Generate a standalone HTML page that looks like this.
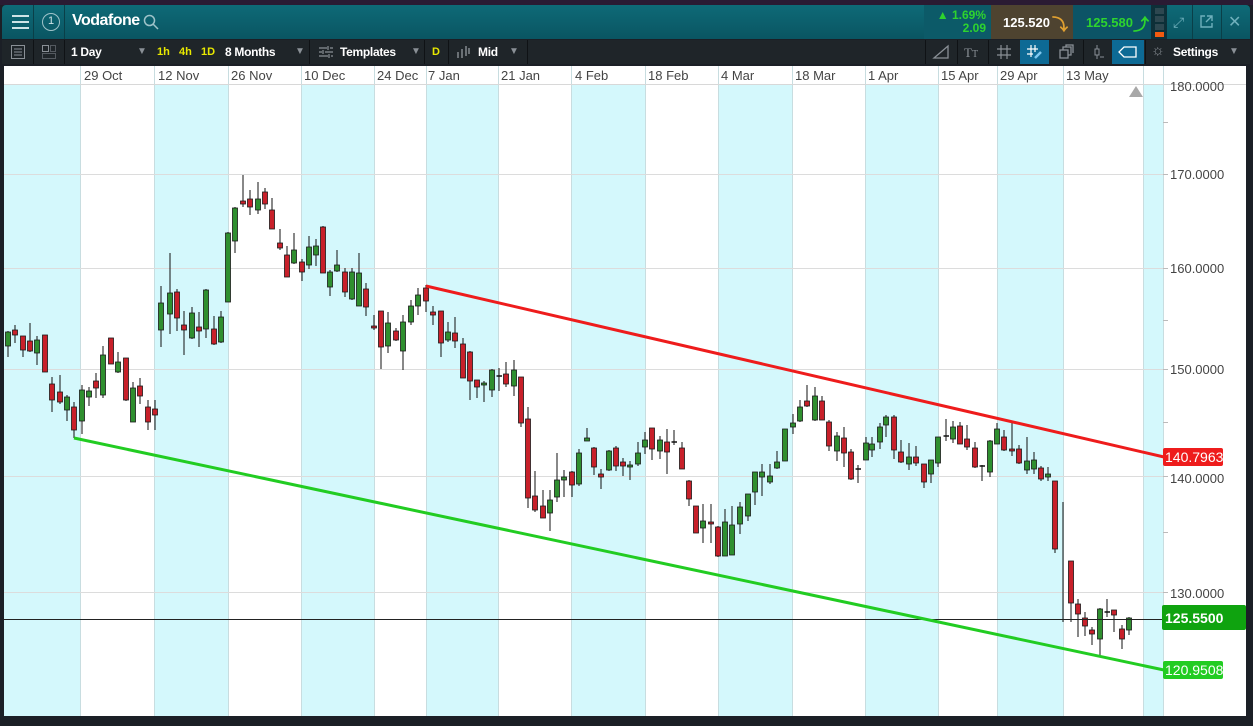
<!DOCTYPE html>
<html><head><meta charset="utf-8"><style>
*{margin:0;padding:0;box-sizing:border-box}
body{width:1253px;height:726px;overflow:hidden;background:#1b1f26;font-family:"Liberation Sans",sans-serif;position:relative}
.abs{position:absolute}
.tb{color:#fff;font-size:12px;font-weight:bold;letter-spacing:-0.3px}
.sep{position:absolute;top:40px;width:1px;height:24px;background:#0f1215}
.y{color:#e8e800;font-size:11px;font-weight:bold}
.dd{color:#8a9096;font-size:10px}
</style></head><body>
<div class="abs" style="left:0;top:0;width:1253px;height:5px;background:#2a1b33"></div>
<div class="abs" style="left:2px;top:5px;width:1248px;height:34px;background:linear-gradient(#0e6a77,#0a5562);border-radius:4px 4px 0 0"></div>
<!-- hamburger -->
<div class="abs" style="left:12px;top:15px;width:17px;height:2px;background:#cfe3e6;box-shadow:0 6px 0 #cfe3e6,0 12px 0 #cfe3e6"></div>
<div class="abs" style="left:33px;top:5px;width:1px;height:34px;background:#0a3f48"></div>
<div class="abs" style="left:42px;top:13px;width:18px;height:18px;border:1.5px solid #9fc3c9;border-radius:50%;color:#cfe3e6;font-size:11px;text-align:center;line-height:15px">1</div>
<div class="abs" style="left:64px;top:5px;width:1px;height:34px;background:#0a3f48"></div>
<div class="abs" style="left:72px;top:12px;color:#fff;font-size:16px;font-weight:bold;letter-spacing:-0.5px">Vodafone</div>
<svg class="abs" style="left:143px;top:14px" width="16" height="16"><circle cx="6.5" cy="6.5" r="5" fill="none" stroke="#9fc3c9" stroke-width="1.5"/><line x1="10" y1="10" x2="15" y2="15" stroke="#9fc3c9" stroke-width="1.5"/></svg>
<!-- price boxes -->
<div class="abs" style="left:924px;top:5px;width:67px;height:34px;background:#0c5a68"></div>
<div class="abs" style="left:936px;top:9px;color:#2ed42e;font-size:12px;font-weight:bold;text-align:right;width:50px;line-height:13px">▲ 1.69%<br>2.09</div>
<div class="abs" style="left:991px;top:5px;width:82px;height:34px;background:#4e4330"></div>
<div class="abs" style="left:1003px;top:15px;color:#fff;font-size:13px;font-weight:bold">125.520</div>
<div class="abs" style="left:1052px;top:11px;color:#e0a030;font-size:16px;font-weight:bold">⤵</div>
<div class="abs" style="left:1073px;top:5px;width:78px;height:34px;background:#0c5466"></div>
<div class="abs" style="left:1086px;top:15px;color:#2ed42e;font-size:13px;font-weight:bold">125.580</div>
<div class="abs" style="left:1133px;top:11px;color:#2ed42e;font-size:16px;font-weight:bold">⤴</div>
<div class="abs" style="left:1151px;top:5px;width:16px;height:34px;background:#0d2f38"></div>
<div class="abs" style="left:1155px;top:8px;width:9px;height:6px;background:#2d4750;box-shadow:0 8px 0 #2d4750,0 16px 0 #2d4750"></div>
<div class="abs" style="left:1155px;top:32px;width:9px;height:5px;background:#f05a10"></div>
<div class="abs" style="left:1173px;top:14px;color:#6fb0bc;font-size:14px">⤢</div>
<div class="abs" style="left:1192px;top:5px;width:1px;height:34px;background:#0a3f48"></div>
<svg class="abs" style="left:1199px;top:14px" width="15" height="15"><path d="M6 2H2V13H13V9M8 2H13V7M13 2L7 8" fill="none" stroke="#6fb0bc" stroke-width="1.4"/></svg>
<div class="abs" style="left:1221px;top:5px;width:1px;height:34px;background:#0a3f48"></div>
<div class="abs" style="left:1228px;top:12px;color:#6fb0bc;font-size:16px">✕</div>
<!-- toolbar -->
<div class="abs" style="left:2px;top:40px;width:1248px;height:24px;background:#1f2529"></div>
<svg class="abs" style="left:10px;top:44px" width="16" height="16"><rect x="1.5" y="1.5" width="13" height="13" fill="none" stroke="#8a9096"/><path d="M4 5H12M4 8H12M4 11H12" stroke="#8a9096"/></svg>
<div class="sep" style="left:33px"></div>
<svg class="abs" style="left:41px;top:44px" width="16" height="16"><rect x="1.5" y="1.5" width="6" height="6" fill="none" stroke="#8a9096"/><rect x="1.5" y="9.5" width="13" height="5" fill="none" stroke="#8a9096" stroke-dasharray="1 1"/><rect x="9.5" y="1.5" width="5" height="6" fill="none" stroke="#8a9096" stroke-dasharray="1 1"/></svg>
<div class="sep" style="left:64px"></div>
<div class="abs tb" style="left:71px;top:45px">1 Day</div>
<div class="abs dd" style="left:137px;top:46px">▼</div>
<div class="abs y" style="left:157px;top:46px">1h</div>
<div class="abs y" style="left:179px;top:46px">4h</div>
<div class="abs y" style="left:201px;top:46px">1D</div>
<div class="abs tb" style="left:225px;top:45px">8 Months</div>
<div class="abs dd" style="left:295px;top:46px">▼</div>
<div class="sep" style="left:309px"></div>
<svg class="abs" style="left:318px;top:45px" width="16" height="14"><path d="M1 3H9M12 3H15M1 7H4M7 7H15M1 11H10M13 11H15M10 1V5M5 5V9M11 9V13" stroke="#8a9096" stroke-width="1.2"/></svg>
<div class="abs tb" style="left:340px;top:45px">Templates</div>
<div class="abs dd" style="left:411px;top:46px">▼</div>
<div class="sep" style="left:424px"></div>
<div class="abs y" style="left:432px;top:46px">D</div>
<div class="sep" style="left:448px"></div>
<svg class="abs" style="left:455px;top:44px" width="16" height="16"><path d="M3 8V14M7 5V14M11 2V12M14 4V10" stroke="#8a9096" stroke-width="1.4"/></svg>
<div class="abs tb" style="left:478px;top:45px">Mid</div>
<div class="abs dd" style="left:509px;top:46px">▼</div>
<div class="sep" style="left:527px"></div>
<div class="sep" style="left:925px"></div>
<svg class="abs" style="left:932px;top:44px" width="18" height="16"><path d="M2 14H16V2Z" fill="none" stroke="#8a9096" stroke-width="1.3"/></svg>
<div class="sep" style="left:957px"></div>
<div class="abs" style="left:964px;top:45px;color:#8a9096;font-size:13px;font-family:'Liberation Serif',serif">T<span style="font-size:10px">T</span></div>
<div class="sep" style="left:988px"></div>
<svg class="abs" style="left:996px;top:44px" width="16" height="16"><path d="M5 1V15M11 1V15M1 5H15M1 11H15" stroke="#8a9096" stroke-width="1.2"/></svg>
<div class="abs" style="left:1020px;top:40px;width:29px;height:24px;background:#0d6a95"></div>
<svg class="abs" style="left:1026px;top:44px" width="18" height="16"><path d="M5 1V13M9 1V8M1 5H12M1 10H7" stroke="#fff" stroke-width="1.2"/><path d="M9 14L15 8" stroke="#7fc8f0" stroke-width="2.5"/></svg>
<svg class="abs" style="left:1058px;top:44px" width="16" height="16"><rect x="2" y="6" width="8" height="8" fill="none" stroke="#8a9096" stroke-width="1.3"/><path d="M5 6V3H13V11H10M8 3V1H15V9" fill="none" stroke="#8a9096" stroke-width="1.3"/></svg>
<div class="sep" style="left:1083px"></div>
<svg class="abs" style="left:1091px;top:44px" width="16" height="16"><path d="M6 1V15" stroke="#8a9096"/><rect x="4" y="5" width="4" height="6" fill="#1f2529" stroke="#8a9096"/><path d="M9 13H13" stroke="#8a9096"/></svg>
<div class="abs" style="left:1112px;top:40px;width:32px;height:24px;background:#0d6a95"></div>
<svg class="abs" style="left:1118px;top:45px" width="20" height="14"><path d="M6 2H18V12H6L1 7Z" fill="none" stroke="#fff" stroke-width="1.3"/></svg>
<div class="sep" style="left:1145px"></div>
<div class="abs" style="left:1151px;top:42px;color:#8a9096;font-size:15px">☼</div>
<div class="abs tb" style="left:1173px;top:45px">Settings</div>
<div class="abs dd" style="left:1229px;top:46px">▼</div>
<!-- chart -->
<svg class="abs" style="left:0;top:64px" width="1253" height="662" viewBox="0 64 1253 662">
<rect x="0" y="64" width="1253" height="662" fill="#1b1f26"/>
<rect x="4" y="66" width="1242" height="650" fill="#fff"/>
<g fill="#d4f8fc">
<rect x="4" y="84" width="76" height="632"/><rect x="154" y="84" width="74" height="632"/><rect x="301" y="84" width="73" height="632"/><rect x="426" y="84" width="72" height="632"/><rect x="571" y="84" width="74" height="632"/><rect x="718" y="84" width="74" height="632"/><rect x="865" y="84" width="73" height="632"/><rect x="997" y="84" width="66" height="632"/><rect x="1143" y="84" width="20" height="632"/>
</g>
<g stroke="#c8dde0" stroke-width="1">
<path d="M80.5 66V716M154.5 66V716M228.5 66V716M301.5 66V716M374.5 66V716M426.5 66V716M498.5 66V716M571.5 66V716M645.5 66V716M718.5 66V716M792.5 66V716M865.5 66V716M938.5 66V716M997.5 66V716M1063.5 66V716M1143.5 66V716M1163.5 66V716"/>
</g>
<path d="M4 84.5H1246" stroke="#d8d8d8"/>
<g stroke="#dcdcdc"><path d="M4 174.5H1163M4 268.5H1163M4 369.5H1163M4 476.5H1163M4 592.5H1163"/></g>
<g stroke="#bbb"><path d="M1163 174.5H1168M1163 268.5H1168M1163 369.5H1168M1163 476.5H1168M1163 592.5H1168M1163 122.5H1168M1163 320.5H1168M1163 422.5H1168M1163 532.5H1168"/></g>
<g font-family="Liberation Sans" font-size="13" fill="#444">
<text x="84" y="80">29 Oct</text><text x="158" y="80">12 Nov</text><text x="231" y="80">26 Nov</text><text x="304" y="80">10 Dec</text><text x="377" y="80">24 Dec</text><text x="428" y="80">7 Jan</text><text x="501" y="80">21 Jan</text><text x="575" y="80">4 Feb</text><text x="648" y="80">18 Feb</text><text x="721" y="80">4 Mar</text><text x="795" y="80">18 Mar</text><text x="868" y="80">1 Apr</text><text x="941" y="80">15 Apr</text><text x="1000" y="80">29 Apr</text><text x="1066" y="80">13 May</text>
<text x="1170" y="91">180.0000</text><text x="1170" y="179">170.0000</text><text x="1170" y="273">160.0000</text><text x="1170" y="374">150.0000</text><text x="1170" y="483">140.0000</text><text x="1170" y="598">130.0000</text>
</g>
<path d="M1129 97L1136 86L1143 97Z" fill="#a8a8a8"/>
<g stroke="#111" stroke-width="1" id="w">
<path d="M8 331V357M15 325V343M23 336V357M30 323V352M37 336V365M45 335V372M52 377V412M60 375V404M67 395V421M74 402V438M82 385V434M89 387V406M96 373V398M103 346V398M111 338V364M118 352V373M126 358V401M133 382V422M140 378V404M148 400V430M155 400V430M161 286V347M170 253V334M177 289V331M184 311V355M192 307V339M199 312V347M206 289V338M214 316V345M221 311V343M228 232V302M235 207V253M243 175V207M250 190V215M258 182V214M265 188V209M272 198V229M280 229V250M287 246V277M294 233V264M302 259V281M309 236V269M316 239V266M323 226V273M330 270V296M337 250V272M345 268V297M352 268V300M359 253V306M366 283V316M374 315V330M381 311V369M388 312V353M396 328V341M403 315V370M411 300V325M418 288V315M426 285V312M433 306V325M441 311V357M448 322V342M455 317V348M463 338V378M470 351V400M477 380V398M484 381V402M492 369V397M499 368V391M506 362V387M514 360V396M521 377V427M528 407V508M535 471V512M543 490V518M550 490V531M557 453V502M564 470V497M572 471V497M579 449V486M587 428V441M594 447V475M601 469V489M609 450V471M616 446V471M623 458V476M630 461V480M638 442V466M645 432V454M652 428V460M660 436V459M667 429V474M674 430V445M682 442V469M689 480V506M696 506V533M703 504V543M711 504V543M718 526V557M725 509V556M732 506V554M740 502V534M748 496V521M755 472V505M762 464V496M770 464V484M777 451V469M785 429V461M793 414V434M800 400V422M807 385V407M815 387V421M822 396V420M829 420V451M837 432V461M844 427V467M851 449V480M858 465V483M866 437V460M872 437V457M880 423V449M886 415V437M894 415V459M901 440V463M909 443V470M916 446V466M924 464V488M931 460V483M938 437V467M946 419V441M953 421V443M960 422V444M967 425V450M975 442V468M982 465V481M990 440V477M997 423V444M1004 430V451M1012 422V456M1019 445V464M1027 437V474M1034 452V474M1041 466V481M1048 467V481M1055 481V553M1063 502V622M1071 561V622M1078 599V637M1085 612V636M1092 627V645M1100 608V655M1107 599V617M1114 610V632M1122 625V649M1129 617V635"/>
</g>
<g stroke="#1a1a1a" stroke-width="0.8" fill="#2f8f2f">
<rect x="5.5" y="332" width="5" height="14"/><rect x="34.5" y="340" width="5" height="13"/><rect x="64.5" y="397" width="5" height="13"/><rect x="79.5" y="390" width="5" height="31"/><rect x="86.5" y="391" width="5" height="6"/><rect x="100.5" y="355" width="5" height="40"/><rect x="115.5" y="362" width="5" height="10"/><rect x="130.5" y="388" width="5" height="34"/><rect x="158.5" y="303" width="5" height="27"/><rect x="167.5" y="293" width="5" height="21"/><rect x="189.5" y="313" width="5" height="25"/><rect x="203.5" y="290" width="5" height="39"/><rect x="218.5" y="317" width="5" height="25"/><rect x="225.5" y="233" width="5" height="69"/><rect x="232.5" y="208" width="5" height="33"/><rect x="255.5" y="199" width="5" height="11"/><rect x="291.5" y="250" width="5" height="13"/><rect x="306.5" y="247" width="5" height="18"/><rect x="313.5" y="246" width="5" height="9"/><rect x="327.5" y="272" width="5" height="15"/><rect x="334.5" y="265" width="5" height="6"/><rect x="349.5" y="272" width="5" height="27"/><rect x="356.5" y="273" width="5" height="33"/><rect x="385.5" y="323" width="5" height="23"/><rect x="400.5" y="322" width="5" height="29"/><rect x="408.5" y="306" width="5" height="16"/><rect x="415.5" y="295" width="5" height="11"/><rect x="445.5" y="332" width="5" height="8"/><rect x="481.5" y="383" width="5" height="2"/><rect x="489.5" y="370" width="5" height="20"/><rect x="511.5" y="370" width="5" height="16"/><rect x="547.5" y="500" width="5" height="13"/><rect x="554.5" y="480" width="5" height="17"/><rect x="561.5" y="477" width="5" height="3"/><rect x="576.5" y="453" width="5" height="31"/><rect x="584.5" y="438" width="5" height="3"/><rect x="606.5" y="451" width="5" height="19"/><rect x="627.5" y="465" width="5" height="2"/><rect x="635.5" y="453" width="5" height="11"/><rect x="642.5" y="440" width="5" height="7"/><rect x="657.5" y="440" width="5" height="11"/><rect x="700.5" y="521" width="5" height="7"/><rect x="722.5" y="522" width="5" height="34"/><rect x="729.5" y="525" width="5" height="30"/><rect x="737.5" y="507" width="5" height="17"/><rect x="745.5" y="494" width="5" height="22"/><rect x="752.5" y="472" width="5" height="20"/><rect x="759.5" y="472" width="5" height="5"/><rect x="767.5" y="476" width="5" height="6"/><rect x="774.5" y="462" width="5" height="6"/><rect x="782.5" y="429" width="5" height="32"/><rect x="790.5" y="423" width="5" height="4"/><rect x="797.5" y="407" width="5" height="14"/><rect x="812.5" y="396" width="5" height="24"/><rect x="834.5" y="436" width="5" height="15"/><rect x="863.5" y="443" width="5" height="17"/><rect x="869.5" y="444" width="5" height="6"/><rect x="877.5" y="427" width="5" height="15"/><rect x="883.5" y="417" width="5" height="8"/><rect x="906.5" y="457" width="5" height="7"/><rect x="928.5" y="460" width="5" height="14"/><rect x="935.5" y="437" width="5" height="26"/><rect x="950.5" y="427" width="5" height="12"/><rect x="987.5" y="441" width="5" height="31"/><rect x="994.5" y="429" width="5" height="15"/><rect x="1024.5" y="461" width="5" height="9"/><rect x="1031.5" y="460" width="5" height="9"/><rect x="1045.5" y="474" width="5" height="3"/><rect x="1097.5" y="609" width="5" height="30"/><rect x="1126.5" y="618" width="5" height="12"/>
</g>
<g stroke="#1a1a1a" stroke-width="0.8" fill="#c8202a">
<rect x="12.5" y="330" width="5" height="5"/><rect x="20.5" y="336" width="5" height="14"/><rect x="27.5" y="341" width="5" height="10"/><rect x="42.5" y="335" width="5" height="37"/><rect x="49.5" y="384" width="5" height="16"/><rect x="57.5" y="392" width="5" height="10"/><rect x="71.5" y="407" width="5" height="23"/><rect x="93.5" y="381" width="5" height="7"/><rect x="108.5" y="338" width="5" height="26"/><rect x="123.5" y="358" width="5" height="42"/><rect x="137.5" y="386" width="5" height="10"/><rect x="145.5" y="407" width="5" height="15"/><rect x="152.5" y="409" width="5" height="6"/><rect x="174.5" y="292" width="5" height="26"/><rect x="181.5" y="325" width="5" height="5"/><rect x="196.5" y="327" width="5" height="4"/><rect x="211.5" y="329" width="5" height="15"/><rect x="240.5" y="201" width="5" height="3"/><rect x="247.5" y="199" width="5" height="8"/><rect x="262.5" y="192" width="5" height="12"/><rect x="269.5" y="210" width="5" height="19"/><rect x="277.5" y="243" width="5" height="5"/><rect x="284.5" y="255" width="5" height="22"/><rect x="299.5" y="262" width="5" height="10"/><rect x="320.5" y="227" width="5" height="46"/><rect x="342.5" y="272" width="5" height="20"/><rect x="363.5" y="289" width="5" height="18"/><rect x="371.5" y="326" width="5" height="2"/><rect x="378.5" y="311" width="5" height="36"/><rect x="393.5" y="331" width="5" height="9"/><rect x="423.5" y="288" width="5" height="13"/><rect x="430.5" y="312" width="5" height="3"/><rect x="438.5" y="311" width="5" height="32"/><rect x="452.5" y="333" width="5" height="8"/><rect x="460.5" y="344" width="5" height="34"/><rect x="467.5" y="352" width="5" height="29"/><rect x="474.5" y="380" width="5" height="7"/><rect x="503.5" y="374" width="5" height="10"/><rect x="518.5" y="377" width="5" height="46"/><rect x="525.5" y="419" width="5" height="79"/><rect x="532.5" y="496" width="5" height="14"/><rect x="540.5" y="506" width="5" height="12"/><rect x="569.5" y="472" width="5" height="13"/><rect x="591.5" y="448" width="5" height="19"/><rect x="598.5" y="474" width="5" height="3"/><rect x="613.5" y="448" width="5" height="18"/><rect x="620.5" y="462" width="5" height="4"/><rect x="649.5" y="428" width="5" height="21"/><rect x="664.5" y="442" width="5" height="10"/><rect x="679.5" y="448" width="5" height="21"/><rect x="686.5" y="481" width="5" height="18"/><rect x="693.5" y="506" width="5" height="27"/><rect x="708.5" y="522" width="5" height="2"/><rect x="715.5" y="527" width="5" height="29"/><rect x="804.5" y="401" width="5" height="5"/><rect x="819.5" y="401" width="5" height="19"/><rect x="826.5" y="422" width="5" height="24"/><rect x="841.5" y="438" width="5" height="15"/><rect x="848.5" y="452" width="5" height="27"/><rect x="891.5" y="417" width="5" height="33"/><rect x="898.5" y="452" width="5" height="10"/><rect x="913.5" y="457" width="5" height="6"/><rect x="921.5" y="464" width="5" height="18"/><rect x="957.5" y="426" width="5" height="18"/><rect x="964.5" y="439" width="5" height="8"/><rect x="972.5" y="448" width="5" height="19"/><rect x="1001.5" y="437" width="5" height="13"/><rect x="1009.5" y="449" width="5" height="2"/><rect x="1016.5" y="449" width="5" height="14"/><rect x="1038.5" y="468" width="5" height="11"/><rect x="1052.5" y="481" width="5" height="68"/><rect x="1068.5" y="561" width="5" height="42"/><rect x="1075.5" y="604" width="5" height="10"/><rect x="1082.5" y="618" width="5" height="8"/><rect x="1089.5" y="630" width="5" height="4"/><rect x="1111.5" y="610" width="5" height="5"/><rect x="1119.5" y="629" width="5" height="10"/>
</g>
<g stroke="#111" stroke-width="1.5"><path d="M855.5 469H861M943.5 436H949M979.5 466H985M671.5 442H677M496.5 376H502M1104.5 612H1110"/></g>
<path d="M4 619.5H1163" stroke="#222" stroke-width="1"/>
<line x1="426" y1="286" x2="1164" y2="457" stroke="#ee1c1c" stroke-width="3"/>
<line x1="74" y1="438" x2="1164" y2="670" stroke="#22cc22" stroke-width="3"/>
<rect x="1163" y="448" width="60" height="18" rx="2" fill="#ee1c1c"/>
<text x="1165" y="462" font-family="Liberation Sans" font-size="14" fill="#fff">140.7963</text>
<rect x="1162" y="605" width="84" height="25" rx="2" fill="#0fa30f"/>
<text x="1165" y="623" font-family="Liberation Sans" font-size="14" font-weight="bold" fill="#fff">125.5500</text>
<rect x="1163" y="661" width="60" height="18" rx="2" fill="#22cc22"/>
<text x="1165" y="675" font-family="Liberation Sans" font-size="14" fill="#fff">120.9508</text>
</svg>
</body></html>
